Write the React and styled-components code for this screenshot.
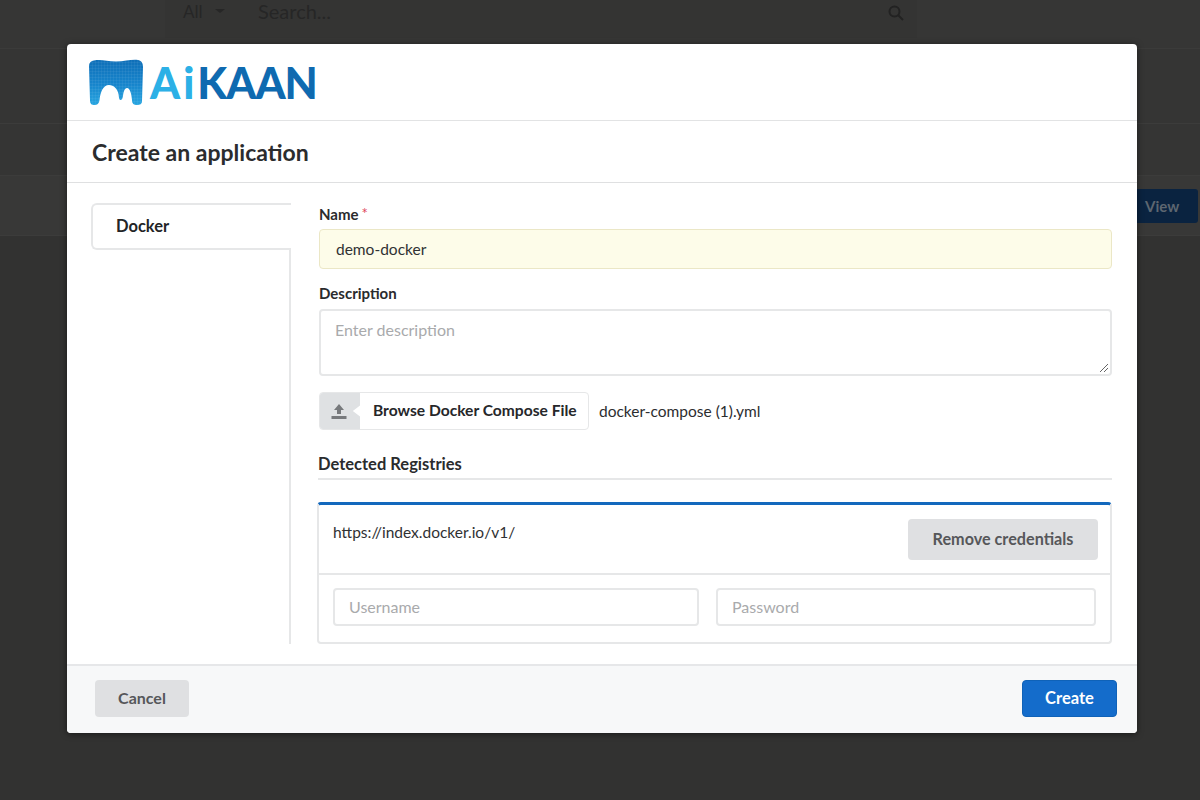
import React from "react";
import styled, { createGlobalStyle } from "styled-components";

const Global = createGlobalStyle`
  html, body { margin: 0; padding: 0; height: 100%; background: #333332; }
  body { font-family: Lato, "Liberation Sans", sans-serif; color: #2a2a2c; overflow: hidden; }
  * { box-sizing: border-box; }
`;

const Page = styled.div`
  position: relative;
  width: 1200px;
  height: 800px;
  background: #323231;
  overflow: hidden;
`;

const BackTop = styled.div`
  height: 49px;
  padding-left: 165px;
  background: #363635;
  border-bottom: 1px solid #3b3b3a;
`;

const BackSearch = styled.div`
  width: 752px;
  height: 38px;
  display: flex;
  align-items: center;
  padding: 0 13px 16px 18px;
  background: #343433;
  color: #262626;
`;

const BackAll = styled.span`
  font-size: 17px;
  width: 75px;
  display: flex;
  align-items: center;
  gap: 12px;
`;

const Caret = styled.i`
  width: 0;
  height: 0;
  border-left: 5px solid transparent;
  border-right: 5px solid transparent;
  border-top: 4px solid #262626;
`;

const BackHint = styled.span`
  flex: 1;
  font-size: 20px;
`;

const SearchGlyph = styled.svg`
  margin-top: 3px;
`;

const BackRow = styled.div`
  height: ${(p) => p.$h}px;
  display: flex;
  justify-content: flex-end;
  align-items: center;
  padding-right: 2px;
  background: ${(p) => p.$bg || "#353534"};
  border-bottom: 1px solid #3c3c3b;
`;

const BackView = styled.div`
  width: 70px;
  height: 34px;
  padding-left: 17px;
  display: flex;
  align-items: center;
  border-radius: 3px;
  background: #0a2340;
  color: #5d6670;
  font-weight: 700;
  font-size: 15px;
`;

const Modal = styled.div`
  position: absolute;
  left: 67px;
  top: 44px;
  width: 1070px;
  height: 689px;
  display: flex;
  flex-direction: column;
  background: #fff;
  border-radius: 4px;
  box-shadow: 0 1px 6px rgba(0, 0, 0, 0.5);
  overflow: hidden;
`;

const LogoBar = styled.header`
  height: 77px;
  flex: none;
  padding: 15px 0 0 22px;
  display: flex;
  align-items: flex-start;
  gap: 6px;
  border-bottom: 1px solid #e2e3e4;
`;

const LogoWord = styled.div`
  font-family: Lato, sans-serif;
  font-weight: 900;
  font-size: 43px;
  line-height: 46px;
  margin-top: 1px;
  letter-spacing: -1px;
  color: #0f6ab0;
`;

const LogoAi = styled.span`
  color: #2cb0e6;
  letter-spacing: 3px;
`;

const TitleBar = styled.div`
  height: 62px;
  flex: none;
  padding: 0 25px;
  display: flex;
  align-items: center;
  border-bottom: 1px solid #dfe0e1;
  font-size: 23px;
  font-weight: 700;
  color: #2b2c2e;
`;

const Body = styled.div`
  flex: 1;
  display: flex;
  padding: 20px 25px 20px 24px;
  min-height: 0;
`;

const Side = styled.aside`
  width: 200px;
  display: flex;
  flex-direction: column;
  flex: none;
`;

const SideTab = styled.div`
  height: 47px;
  flex: none;
  padding: 0 0 2px 23px;
  display: flex;
  align-items: center;
  border: 2px solid #e6e7e8;
  border-right: none;
  border-radius: 6px 0 0 6px;
  font-size: 16.5px;
  font-weight: 700;
  color: #232426;
`;

const SideFill = styled.div`
  flex: 1;
  border-right: 2px solid #e6e7e8;
`;

const Form = styled.div`
  flex: 1;
  min-width: 0;
  padding: 1px 0 0 26px;
  display: flex;
  flex-direction: column;
`;

const Label = styled.label`
  display: block;
  flex: none;
  font-size: 15px;
  font-weight: 700;
  line-height: 20px;
  color: #2a2b2d;
  margin-left: 2px;
  margin-bottom: ${(p) => p.$mb}px;
`;

const Req = styled.sup`
  color: #e0455a;
  font-size: 15px;
  font-weight: 400;
  line-height: 0;
  margin-left: 3px;
  vertical-align: 1px;
`;

const NameInput = styled.div`
  height: 40px;
  flex: none;
  margin: 0 0 14px 2px;
  padding-left: 16px;
  display: flex;
  align-items: center;
  background: #fdfce9;
  border: 1px solid #ebe7c6;
  border-radius: 4px;
  font-size: 15.5px;
  color: #303133;
`;

const TextArea = styled.div`
  position: relative;
  height: 67px;
  flex: none;
  margin: 0 0 16px 2px;
  padding: 9px 14px;
  border: 2px solid #e6e7e8;
  border-radius: 4px;
  font-size: 16px;
  color: #a9aaac;
`;

const Grip = styled.svg`
  position: absolute;
  right: 1px;
  bottom: 1px;
`;

const FileRow = styled.div`
  display: flex;
  flex: none;
  align-items: center;
  gap: 10px;
  margin: 0 0 22px 2px;
`;

const BrowseBtn = styled.div`
  width: 270px;
  height: 38px;
  display: flex;
  align-items: center;
  border: 1px solid #e6e7e8;
  border-radius: 4px;
  overflow: hidden;
  font-size: 15.6px;
  font-weight: 700;
  color: #26272a;
`;

const BrowseIcon = styled.div`
  width: 40px;
  height: 100%;
  flex: none;
  display: flex;
  align-items: center;
  justify-content: center;
  padding-right: 3px;
  background: #dfe1e3;
  clip-path: polygon(0 0, 100% 0, 100% 35%, 82% 50%, 100% 65%, 100% 100%, 0 100%);
`;

const BrowseText = styled.span`
  padding: 0 0 2px 13px;
`;

const FileName = styled.span`
  font-size: 15.5px;
  color: #2c2d2f;
`;

const SectionTitle = styled.div`
  flex: none;
  font-size: 16.5px;
  font-weight: 700;
  line-height: 24px;
  padding-bottom: 2px;
  margin: 0 0 22px 1px;
  border-bottom: 2px solid #e6e7e8;
  color: #2a2b2d;
`;

const Card = styled.div`
  height: 142px;
  flex: none;
  border: 2px solid #e6e7e8;
  border-top: 3px solid #1368bd;
  border-radius: 4px;
`;

const CardHead = styled.div`
  height: 70px;
  padding: 14px 12px 0 14px;
  display: flex;
  justify-content: space-between;
  align-items: flex-start;
  border-bottom: 2px solid #e6e7e8;
`;

const Url = styled.span`
  font-size: 15.5px;
  line-height: 26px;
  color: #303133;
`;

const GreyBtn = styled.div`
  width: ${(p) => p.$w}px;
  height: ${(p) => p.$h}px;
  flex: none;
  padding-bottom: 2px;
  display: flex;
  align-items: center;
  justify-content: center;
  background: #dfe0e2;
  border-radius: 4px;
  font-size: ${(p) => p.$fs}px;
  font-weight: 700;
  color: #56575a;
`;

const CardBody = styled.div`
  padding: 13px 14px 0;
  display: flex;
  gap: 17px;
`;

const SmallInput = styled.div`
  height: 38px;
  width: ${(p) => p.$w}px;
  padding: 0 0 1px 14px;
  display: flex;
  align-items: center;
  border: 2px solid #e6e7e8;
  border-radius: 4px;
  font-size: 16px;
  color: #a9aaac;
`;

const Footer = styled.footer`
  height: 69px;
  flex: none;
  padding: 14px 20px 0 28px;
  display: flex;
  justify-content: space-between;
  align-items: flex-start;
  background: #f7f8f9;
  border-top: 2px solid #e6e7e9;
`;

const CreateBtn = styled.div`
  width: 95px;
  height: 37px;
  padding-bottom: 2px;
  display: flex;
  align-items: center;
  justify-content: center;
  background: #146ccb;
  border: 1px solid #0f62b8;
  border-radius: 4px;
  color: #fff;
  font-size: 16.5px;
  font-weight: 700;
`;

const toothPath =
  "M5 1.5 C12 0 18 2.5 27 2.5 C36 2.5 43 0 49 1 C52 1.5 54 3.5 54 8 L53 42 C53 45 51 46 48 46 C45 46 43 45 43 41 C42.5 35 41 29 38 29 C35.5 29 34.5 33 34 37 C33.5 40 32.5 41 31.5 41 C30 41 30 38 29.5 35 C28.5 30 25 26 20 26 C14 26 11.5 33 10.5 41 C10 45 8 46 5.5 46 C2.5 46 1 45 1 41 L0 8 C0 4 1.5 2 5 1.5 Z";

const Tooth = () => (
  <svg width="55" height="47" viewBox="0 0 55 47">
    <defs>
      <linearGradient id="toothFill" x1="0" y1="0" x2="0" y2="1">
        <stop offset="0" stopColor="#0f6fb8" />
        <stop offset="0.55" stopColor="#1785cc" />
        <stop offset="1" stopColor="#27a5e0" />
      </linearGradient>
      <pattern id="toothGrid" width="3" height="3" patternUnits="userSpaceOnUse">
        <path d="M0 0H3M0 0V3" stroke="#ffffff" strokeOpacity="0.14" strokeWidth="0.7" fill="none" />
      </pattern>
    </defs>
    <path d={toothPath} fill="url(#toothFill)" />
    <path d={toothPath} fill="url(#toothGrid)" />
  </svg>
);

const UploadGlyph = () => (
  <svg width="16" height="15" viewBox="0 0 16 15">
    <path d="M8 0 L13 6 H10 V10 H6 V6 H3 Z" fill="#77797c" />
    <rect x="0.5" y="12" width="15" height="3" fill="#77797c" />
  </svg>
);

export default function App() {
  return (
    <>
      <Global />
      <Page>
        <BackTop>
          <BackSearch>
            <BackAll>
              All <Caret />
            </BackAll>
            <BackHint>Search...</BackHint>
            <SearchGlyph width="16" height="16" viewBox="0 0 16 16" fill="none" stroke="#222" strokeWidth="2">
              <circle cx="6.5" cy="6.5" r="5" />
              <path d="M10 10 L15 15" />
            </SearchGlyph>
          </BackSearch>
        </BackTop>
        <BackRow $h={75} />
        <BackRow $h={52} />
        <BackRow $h={60} $bg="#383837">
          <BackView>View</BackView>
        </BackRow>
        <Modal>
          <LogoBar>
            <Tooth />
            <LogoWord>
              <LogoAi>Ai</LogoAi>KAAN
            </LogoWord>
          </LogoBar>
          <TitleBar>Create an application</TitleBar>
          <Body>
            <Side>
              <SideTab>Docker</SideTab>
              <SideFill />
            </Side>
            <Form>
              <Label $mb={5}>
                Name<Req>*</Req>
              </Label>
              <NameInput>demo-docker</NameInput>
              <Label $mb={6}>Description</Label>
              <TextArea>
                Enter description
                <Grip width="10" height="10" viewBox="0 0 10 10" stroke="#666" strokeWidth="1">
                  <path d="M9 1 L1 9 M9 5 L5 9" />
                </Grip>
              </TextArea>
              <FileRow>
                <BrowseBtn>
                  <BrowseIcon>
                    <UploadGlyph />
                  </BrowseIcon>
                  <BrowseText>Browse Docker Compose File</BrowseText>
                </BrowseBtn>
                <FileName>docker-compose (1).yml</FileName>
              </FileRow>
              <SectionTitle>Detected Registries</SectionTitle>
              <Card>
                <CardHead>
                  <Url>https://index.docker.io/v1/</Url>
                  <GreyBtn $w={190} $h={41} $fs={16.2}>Remove credentials</GreyBtn>
                </CardHead>
                <CardBody>
                  <SmallInput $w={366}>Username</SmallInput>
                  <SmallInput $w={380}>Password</SmallInput>
                </CardBody>
              </Card>
            </Form>
          </Body>
          <Footer>
            <GreyBtn $w={94} $h={37} $fs={16}>Cancel</GreyBtn>
            <CreateBtn>Create</CreateBtn>
          </Footer>
        </Modal>
      </Page>
    </>
  );
}
